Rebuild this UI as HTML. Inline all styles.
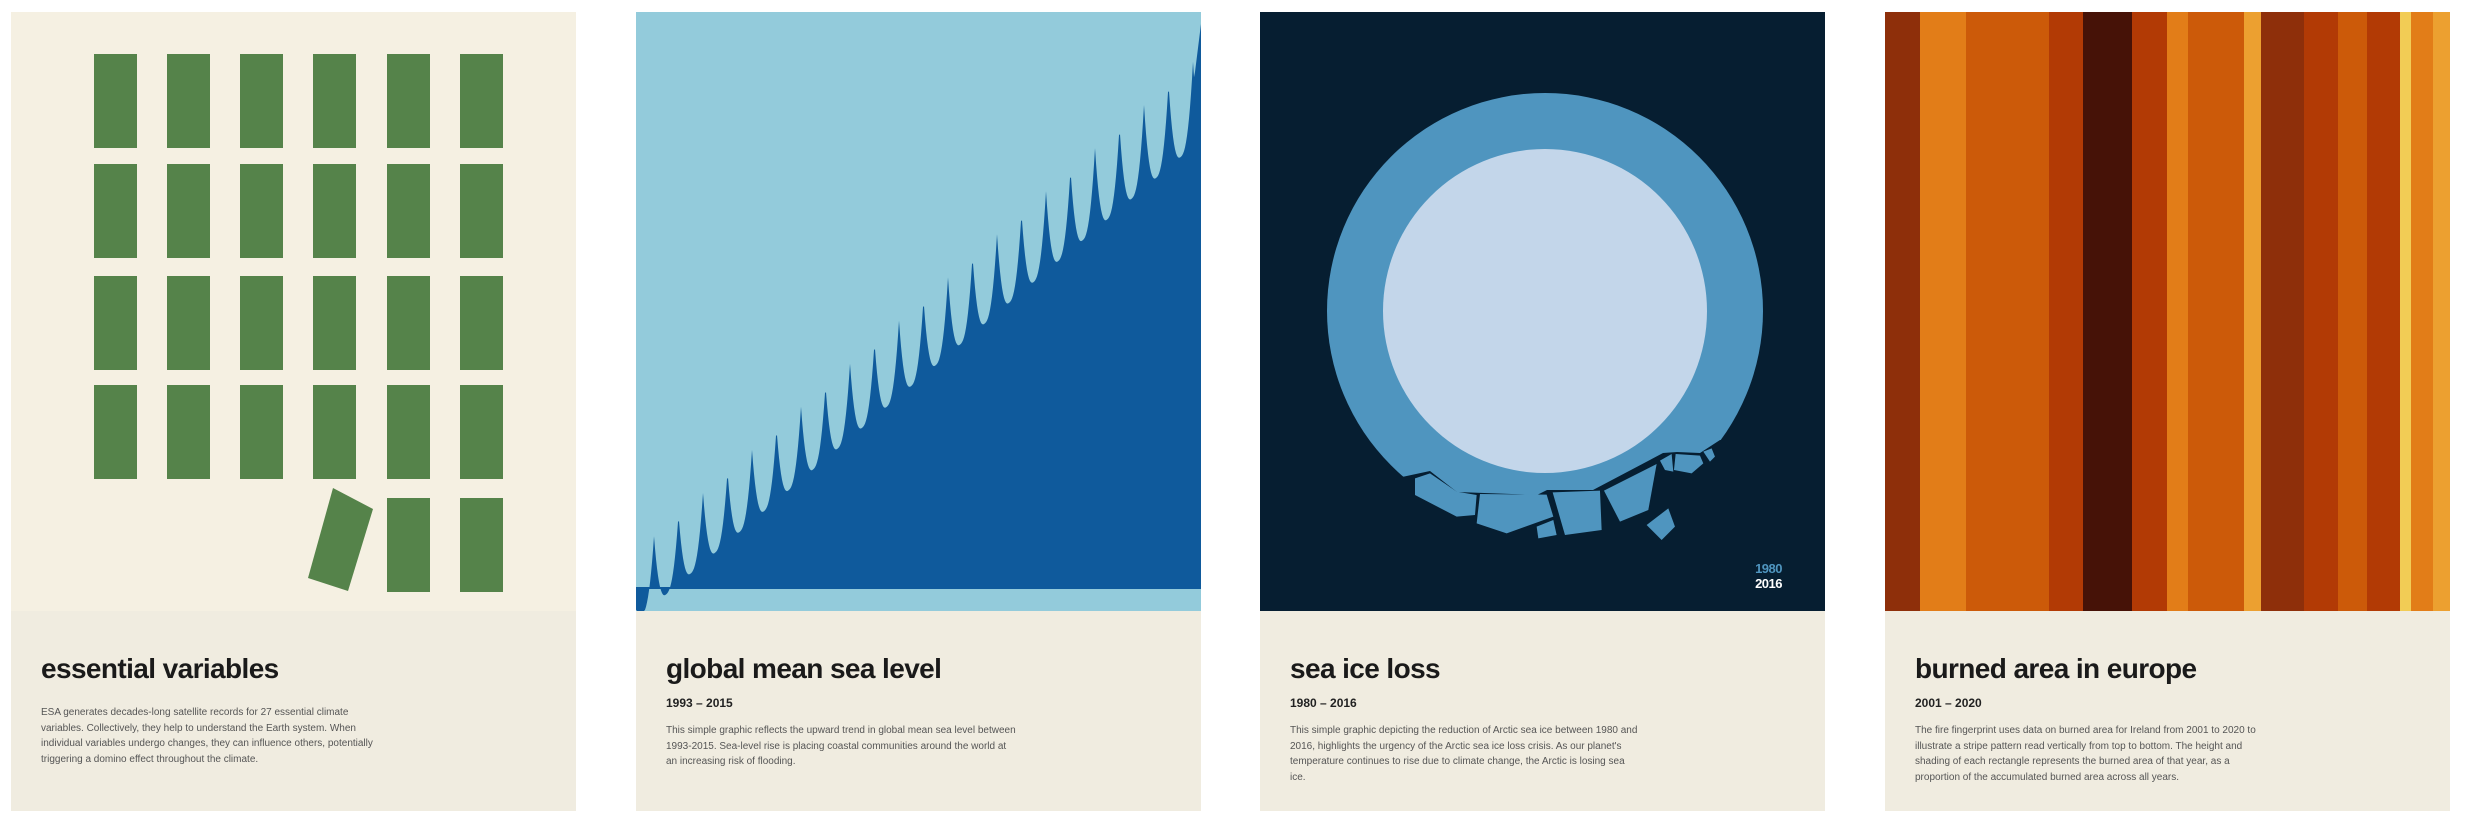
<!DOCTYPE html>
<html><head><meta charset="utf-8">
<style>
html,body{margin:0;padding:0;background:#fff;}
body{width:2470px;height:826px;position:relative;overflow:hidden;font-family:"Liberation Sans",Arial,sans-serif;}
.p{position:absolute;top:12px;width:565px;height:799px;background:#f0ece0;overflow:hidden;}
.img{position:absolute;left:0;top:0;width:565px;height:599px;}
.t{position:absolute;left:30px;top:641px;font-size:28px;line-height:32px;font-weight:bold;color:#1a1a1a;letter-spacing:-0.6px;white-space:nowrap;}
.d{position:absolute;left:30px;top:684px;font-size:12px;line-height:14px;font-weight:bold;color:#222;}
.x{position:absolute;left:30px;top:711px;font-size:10px;line-height:15.5px;color:#555;white-space:nowrap;}
</style></head><body>

<div class="p" style="left:11px;">
  <svg class="img" viewBox="0 0 565 599" width="565" height="599">
    <rect width="565" height="599" fill="#f5f0e2"/>
    <g fill="#55834a" transform="translate(-11,-12)">
      <rect x="94" y="54" width="43" height="94"/><rect x="167" y="54" width="43" height="94"/><rect x="240" y="54" width="43" height="94"/><rect x="313" y="54" width="43" height="94"/><rect x="387" y="54" width="43" height="94"/><rect x="460" y="54" width="43" height="94"/>
      <rect x="94" y="164" width="43" height="94"/><rect x="167" y="164" width="43" height="94"/><rect x="240" y="164" width="43" height="94"/><rect x="313" y="164" width="43" height="94"/><rect x="387" y="164" width="43" height="94"/><rect x="460" y="164" width="43" height="94"/>
      <rect x="94" y="276" width="43" height="94"/><rect x="167" y="276" width="43" height="94"/><rect x="240" y="276" width="43" height="94"/><rect x="313" y="276" width="43" height="94"/><rect x="387" y="276" width="43" height="94"/><rect x="460" y="276" width="43" height="94"/>
      <rect x="94" y="385" width="43" height="94"/><rect x="167" y="385" width="43" height="94"/><rect x="240" y="385" width="43" height="94"/><rect x="313" y="385" width="43" height="94"/><rect x="387" y="385" width="43" height="94"/><rect x="460" y="385" width="43" height="94"/>
      <polygon points="333,488 373,509 348,591 308,578"/>
      <rect x="387" y="498" width="43" height="94"/><rect x="460" y="498" width="43" height="94"/>
    </g>
  </svg>
  <div class="t" style="top:641px">essential variables</div>
  <div class="x" style="top:693px">ESA generates decades-long satellite records for 27 essential climate<br>variables. Collectively, they help to understand the Earth system. When<br>individual variables undergo changes, they can influence others, potentially<br>triggering a domino effect throughout the climate.</div>
</div>

<div class="p" style="left:636px;">
  <svg class="img" viewBox="0 0 565 599" width="565" height="599">
    <rect width="565" height="599" fill="#93cbdb"/>
    <path id="wave" fill="#0f5a9c" d=""/>
    <rect x="0" y="575" width="565" height="2" fill="#0f5a9c"/>
  </svg>
  <div class="t">global mean sea level</div>
  <div class="d">1993 – 2015</div>
  <div class="x">This simple graphic reflects the upward trend in global mean sea level between<br>1993-2015. Sea-level rise is placing coastal communities around the world at<br>an increasing risk of flooding.</div>
</div>

<div class="p" style="left:1260px;">
  <svg class="img" viewBox="0 0 565 599" width="565" height="599">
    <rect width="565" height="599" fill="#061e31"/>
    <g transform="translate(-1260,-12)">
      <defs><clipPath id="cut"><polygon points="1260,12 1825,12 1825,440 1720,440 1700,453 1677,452 1663,453 1593,490 1547,490 1537,495 1457,492 1430,471 1402,477 1380,457 1260,457"/></clipPath></defs>
      <circle cx="1545" cy="311" r="218" fill="#4f95bf" clip-path="url(#cut)"/>
      <g fill="#4f95bf" transform="translate(1380,420) scale(0.3333)">
        <polygon points="105,175 150,160 230,215 290,225 285,285 230,290 105,225"/>
        <polygon points="300,222 500,224 520,290 380,340 290,310"/>
        <polygon points="518,217 660,212 665,330 555,345"/>
        <polygon points="672,212 830,132 805,270 720,305"/>
        <polygon points="840,122 875,102 880,155 855,150"/>
        <polygon points="887,102 960,107 970,130 935,160 882,150"/>
        <polygon points="970,95 995,85 1005,110 990,125"/>
        <polygon points="470,320 520,300 530,345 475,355"/>
        <polygon points="800,315 865,265 885,320 845,360"/>
      </g>
      <circle cx="1545" cy="311" r="162" fill="#c3d6ea"/>
      <text x="1782" y="573" text-anchor="end" font-family="Liberation Sans, sans-serif" font-size="13" font-weight="bold" fill="#4f95bf" letter-spacing="-0.5">1980</text>
      <text x="1782" y="588" text-anchor="end" font-family="Liberation Sans, sans-serif" font-size="13" font-weight="bold" fill="#ffffff" letter-spacing="-0.5">2016</text>
    </g>
  </svg>
  <div class="t">sea ice loss</div>
  <div class="d">1980 – 2016</div>
  <div class="x">This simple graphic depicting the reduction of Arctic sea ice between 1980 and<br>2016, highlights the urgency of the Arctic sea ice loss crisis. As our planet's<br>temperature continues to rise due to climate change, the Arctic is losing sea<br>ice.</div>
</div>

<div class="p" style="left:1885px;">
  <svg class="img" viewBox="0 0 565 599" width="565" height="599">
    <g transform="translate(-1885,0)">
      <rect x="1885" y="0" width="35" height="599" fill="#8e2f0a"/>
      <rect x="1920" y="0" width="46" height="599" fill="#e27d18"/>
      <rect x="1966" y="0" width="83" height="599" fill="#cc5a09"/>
      <rect x="2049" y="0" width="34" height="599" fill="#b23a05"/>
      <rect x="2083" y="0" width="49" height="599" fill="#461207"/>
      <rect x="2132" y="0" width="35" height="599" fill="#b23a05"/>
      <rect x="2167" y="0" width="21" height="599" fill="#e27d18"/>
      <rect x="2188" y="0" width="56" height="599" fill="#cc5a09"/>
      <rect x="2244" y="0" width="17" height="599" fill="#eca030"/>
      <rect x="2261" y="0" width="43" height="599" fill="#8e2f0a"/>
      <rect x="2304" y="0" width="34" height="599" fill="#b23a05"/>
      <rect x="2338" y="0" width="29" height="599" fill="#cc5a09"/>
      <rect x="2367" y="0" width="33" height="599" fill="#b23a05"/>
      <rect x="2400" y="0" width="11" height="599" fill="#f2cc55"/>
      <rect x="2411" y="0" width="22" height="599" fill="#e27d18"/>
      <rect x="2433" y="0" width="17" height="599" fill="#eca030"/>
    </g>
  </svg>
  <div class="t">burned area in europe</div>
  <div class="d">2001 – 2020</div>
  <div class="x">The fire fingerprint uses data on burned area for Ireland from 2001 to 2020 to<br>illustrate a stripe pattern read vertically from top to bottom. The height and<br>shading of each rectangle represents the burned area of that year, as a<br>proportion of the accumulated burned area across all years.</div>
</div>

<script>
(function(){
  var pts=[];
  for(var x=0;x<=565;x+=1){
    var T=608-0.85*x;
    var A=68+0.03*x;
    var p=((x-18)/24.5)%1; if(p<0)p+=1;
    var d=Math.min(p,1-p);
    var f=Math.pow(1-2*d,2.5);
    var y=T-A*f;
    if(x>555) y=Math.min(y,12+(565-x)*8);
    if(y>599)y=599;
    pts.push(x+","+y.toFixed(1));
  }
  var dd="M0,576 L"+pts.join(" L")+" L565,576 Z";
  document.getElementById("wave").setAttribute("d",dd);
})();
</script>
</body></html>
